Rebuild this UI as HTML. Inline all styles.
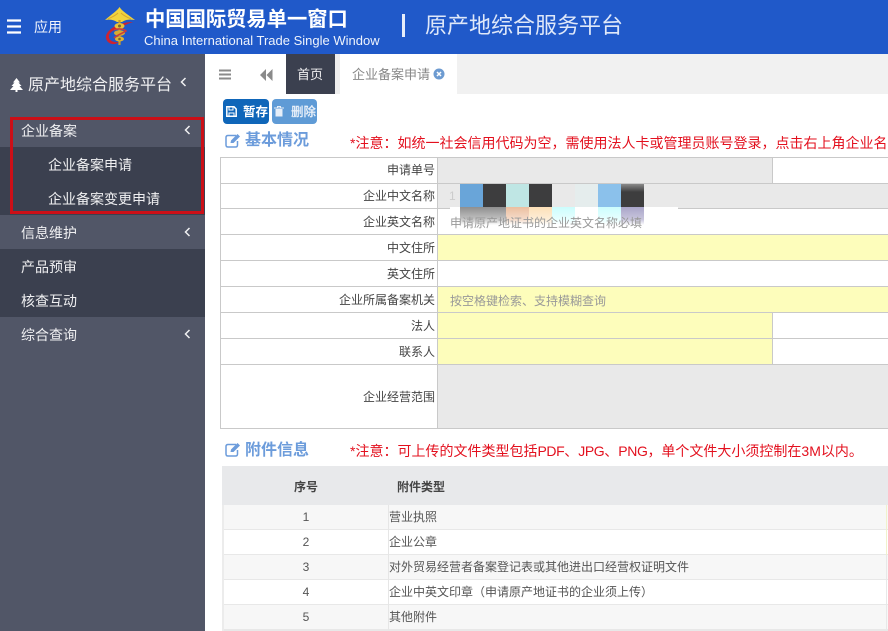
<!DOCTYPE html>
<html lang="zh"><head><meta charset="utf-8"><title>原产地综合服务平台</title>
<style>
html,body{margin:0;padding:0;background:#fff}
body{width:888px;height:631px;overflow:hidden;position:relative;font-family:"Liberation Sans","Noto Sans CJK SC",sans-serif;color:#333;filter:blur(.3px)}
.a,.t{position:absolute}
.t{white-space:nowrap;line-height:20px}
.menu{color:#f0f0f2;font-size:14px;left:21px}
.sub{color:#f0f0f2;font-size:14px;left:48px}
.lab{font-size:12px;color:#444;right:453px;text-align:right}
.note{color:#e3101e;font-size:14px;left:350px}
.note span{letter-spacing:-.4px}
.sec{color:#6c9cdb;font-size:16px;font-weight:bold;left:245px}
.num{font-size:12px;color:#555;left:286px;width:40px;text-align:center}
.cell{font-size:12px;color:#555;left:389px}
.ph{font-size:12px;color:#999;left:450px}
</style></head><body>
<div class="a" style="left:0;top:0;width:888px;height:54px;background:#2059c9"></div>
<svg class="a" style="left:7px;top:19px" width="15" height="15"><path d="M0 1.500H14M0 7.500H14M0 13.500H14" stroke="#fff" stroke-width="2.200"/></svg>
<div class="t" style="left:34px;top:17px;font-size:14px;color:#f2f5fc">应用</div>
<svg class="a" style="left:104px;top:6px" width="32" height="41" viewBox="0 0 32 41">
<path d="M29 16C13 16 1 25 2 32C3 38 10 40 15 36C9 37 4 34 5 29C7 24 18 20 29 16Z" fill="#cf2230"/>
<path d="M15.500 1C13 5 8 8 1 14C6 13 10 14 13 16H18C21 14 25 13 31 14C23 8 18 5 15.500 1Z" fill="#f2d33d"/>
<path d="M4 13C8 11 11 10 14 7M27 13C23 11 20 10 17 7" stroke="#d9a92c" stroke-width="1" fill="none"/>
<path d="M15.500 14V39" stroke="#c89a2a" stroke-width="2.200"/>
<ellipse cx="15.500" cy="20" rx="5" ry="3" fill="#e9c23a"/>
<ellipse cx="15.500" cy="27" rx="5.500" ry="2.800" fill="#d7ab30"/>
<ellipse cx="15.500" cy="33" rx="4.500" ry="2.500" fill="#e0b432"/>
<path d="M10 24C14 22 20 23 22 25C19 27 13 29 10 32" stroke="#cf3a3a" stroke-width="1.500" fill="none"/>
<circle cx="15.500" cy="20" r="1.500" fill="#7a6a30"/>
<circle cx="15.500" cy="33" r="1.300" fill="#7a6a30"/>
</svg>
<div class="t" style="left:145px;top:10px;font-size:20.300px;font-weight:bold;color:#fff">中国国际贸易单一窗口</div>
<div class="t" style="left:144px;top:31px;font-size:13px;color:#eef3fc">China International Trade Single Window</div>
<div class="a" style="left:402px;top:14px;width:3px;height:23px;background:#e6edfa"></div>
<div class="t" style="left:425px;top:16px;font-size:22px;color:#dfe8f9">原产地综合服务平台</div>
<div class="a" style="left:0;top:54px;width:205px;height:577px;background:#515667"></div>
<svg class="a" style="left:10px;top:78px" width="13" height="14" viewBox="0 0 13 14"><path d="M6.500 0L10 4.500H8.500L11.500 8H9.500L13 12H7.500V14H5.500V12H0L3.500 8H1.500L4.500 4.500H3Z" fill="#fff"/></svg>
<div class="t" style="left:28px;top:76px;font-size:16px;color:#f0f0f2">原产地综合服务平台</div>
<svg class="a" style="left:180px;top:77px" width="7" height="10"><path d="M5.500 1L1.500 5L5.500 9" stroke="#f0f0f2" stroke-width="1.500" fill="none"/></svg>
<div class="a" style="left:0;top:147px;width:205px;height:68px;background:#3b404f"></div>
<div class="a" style="left:0;top:249px;width:205px;height:68px;background:#3b404f"></div>
<div class="t menu" style="top:121px">企业备案</div>
<div class="t sub" style="top:155px">企业备案申请</div>
<div class="t sub" style="top:189px">企业备案变更申请</div>
<div class="t menu" style="top:223px">信息维护</div>
<div class="t menu" style="top:257px">产品预审</div>
<div class="t menu" style="top:291px">核查互动</div>
<div class="t menu" style="top:325px">综合查询</div>
<svg class="a" style="left:184px;top:125px" width="7" height="10"><path d="M5.500 1L1.500 5L5.500 9" stroke="#f0f0f2" stroke-width="1.500" fill="none"/></svg>
<svg class="a" style="left:184px;top:227px" width="7" height="10"><path d="M5.500 1L1.500 5L5.500 9" stroke="#f0f0f2" stroke-width="1.500" fill="none"/></svg>
<svg class="a" style="left:184px;top:329px" width="7" height="10"><path d="M5.500 1L1.500 5L5.500 9" stroke="#f0f0f2" stroke-width="1.500" fill="none"/></svg>
<div class="a" style="left:10px;top:117px;width:188px;height:91px;border:3px solid #cc0f17"></div>
<svg class="a" style="left:219px;top:69px" width="12" height="11"><path d="M0 1.500H12M0 5.500H12M0 9.500H12" stroke="#8a8a8a" stroke-width="2"/></svg>
<svg class="a" style="left:260px;top:69px" width="13" height="12"><path d="M6 0V12L0 6ZM12.500 0V12L6.500 6Z" fill="#8a8a8a"/></svg>
<div class="a" style="left:286px;top:54px;width:49px;height:40px;background:#3b404f"></div>
<div class="t" style="left:297px;top:65px;font-size:13px;color:#f0f0f2">首页</div>
<div class="a" style="left:335px;top:54px;width:5px;height:40px;background:#eeeeee"></div>
<div class="a" style="left:457px;top:54px;width:431px;height:40px;background:#f1f1f1"></div>
<div class="t" style="left:352px;top:65px;font-size:13px;color:#888">企业备案申请</div>
<svg class="a" style="left:433px;top:68px" width="12" height="12"><circle cx="6" cy="6" r="5.500" fill="#6d9bd1"/><path d="M4 4L8 8M8 4L4 8" stroke="#fff" stroke-width="1.500"/></svg>
<div class="a" style="left:223px;top:99px;width:46px;height:25px;background:#0f66b9;border-radius:4px"></div>
<div class="a" style="left:272px;top:99px;width:45px;height:25px;background:#5f9bd6;border-radius:4px"></div>
<svg class="a" style="left:226px;top:106px" width="11" height="11"><path d="M.8.8H8L10.200 3V10.200H.8Z" fill="none" stroke="#fff" stroke-width="1.500"/><path d="M3 1V4H7V1M3 10V7H8V10" stroke="#fff" fill="none"/></svg>
<div class="t" style="left:243px;top:102px;font-size:12.500px;font-weight:bold;color:#fff">暂存</div>
<svg class="a" style="left:274px;top:106px" width="10" height="11"><path d="M0 2H10M3.500 2V.5H6.500V2" stroke="#e6eef8" fill="none"/><path d="M1.500 3H8.500V10.500H1.500Z" fill="#e6eef8"/></svg>
<div class="t" style="left:291px;top:102px;font-size:12.500px;font-weight:bold;color:#e6eef8">删除</div>
<svg class="a" style="left:225px;top:133px" width="16" height="15" viewBox="0 0 16 15"><path d="M11 2.500H3Q1 2.500 1 4.500V12Q1 14 3 14H10.500Q12.500 14 12.500 12V8" fill="none" stroke="#6c9cdb" stroke-width="1.500"/><path d="M5.500 10L6 7.500L12.500 1L15 3.500L8.500 10Z" fill="#6c9cdb"/></svg>
<div class="t sec" style="top:131px">基本情况</div>
<div class="t note" style="top:133px">*注意：如统一社会信用代码为空，需使用法人卡或管理员账号登录，点击右上角企业名</div>
<div class="a" style="left:438px;top:158px;width:334px;height:25px;background:#e9e9e9"></div>
<div class="a" style="left:438px;top:184px;width:450px;height:24px;background:#e9e9e9"></div>
<div class="a" style="left:438px;top:235px;width:450px;height:25px;background:#fdfdbb"></div>
<div class="a" style="left:438px;top:287px;width:450px;height:25px;background:#fdfdbb"></div>
<div class="a" style="left:438px;top:313px;width:334px;height:51px;background:#fdfdbb"></div>
<div class="a" style="left:438px;top:365px;width:450px;height:63px;background:#e9e9e9"></div>
<div class="a" style="left:220px;top:157px;width:668px;height:1px;background:#c9c9c9"></div>
<div class="a" style="left:220px;top:183px;width:668px;height:1px;background:#c9c9c9"></div>
<div class="a" style="left:220px;top:208px;width:668px;height:1px;background:#c9c9c9"></div>
<div class="a" style="left:220px;top:234px;width:668px;height:1px;background:#c9c9c9"></div>
<div class="a" style="left:220px;top:260px;width:668px;height:1px;background:#c9c9c9"></div>
<div class="a" style="left:220px;top:286px;width:668px;height:1px;background:#c9c9c9"></div>
<div class="a" style="left:220px;top:312px;width:668px;height:1px;background:#c9c9c9"></div>
<div class="a" style="left:220px;top:338px;width:668px;height:1px;background:#c9c9c9"></div>
<div class="a" style="left:220px;top:364px;width:668px;height:1px;background:#c9c9c9"></div>
<div class="a" style="left:220px;top:428px;width:668px;height:1px;background:#c9c9c9"></div>
<div class="a" style="left:220px;top:157px;width:1px;height:272px;background:#c9c9c9"></div>
<div class="a" style="left:437px;top:157px;width:1px;height:272px;background:#c9c9c9"></div>
<div class="a" style="left:772px;top:157px;width:1px;height:26px;background:#c9c9c9"></div>
<div class="a" style="left:772px;top:312px;width:1px;height:52px;background:#c9c9c9"></div>
<div class="t lab" style="top:160px">申请单号</div>
<div class="t lab" style="top:186px">企业中文名称</div>
<div class="t lab" style="top:212px">企业英文名称</div>
<div class="t lab" style="top:238px">中文住所</div>
<div class="t lab" style="top:264px">英文住所</div>
<div class="t lab" style="top:290px">企业所属备案机关</div>
<div class="t lab" style="top:316px">法人</div>
<div class="t lab" style="top:342px">联系人</div>
<div class="t lab" style="top:387px">企业经营范围</div>
<div class="a" style="left:450px;top:207px;width:228px;height:27px;background:#fff"></div>
<div class="a" style="left:460px;top:184px;width:23px;height:23px;background:#69a5d9"></div>
<div class="a" style="left:483px;top:184px;width:23px;height:23px;background:#3d3d3e"></div>
<div class="a" style="left:506px;top:184px;width:23px;height:23px;background:#bfe6e4"></div>
<div class="a" style="left:529px;top:184px;width:23px;height:23px;background:#3d3d3e"></div>
<div class="a" style="left:575px;top:184px;width:23px;height:23px;background:#e5eded"></div>
<div class="a" style="left:598px;top:184px;width:23px;height:23px;background:#8bc1eb"></div>
<div class="a" style="left:621px;top:184px;width:23px;height:23px;background:linear-gradient(#8a8a8a,#3d3d3e 35%)"></div>
<div class="a" style="left:460px;top:207px;width:46px;height:18px;background:linear-gradient(#8f8f8f,#bbb 60%,#fff)"></div>
<div class="a" style="left:506px;top:207px;width:23px;height:18px;background:linear-gradient(#ecbf9f,#f5dccb 70%,#fff)"></div>
<div class="a" style="left:529px;top:207px;width:23px;height:18px;background:linear-gradient(#fde0b8,#fdeed8 70%,#fff)"></div>
<div class="a" style="left:552px;top:207px;width:23px;height:18px;background:linear-gradient(#ccfdfd,#e8ffff 70%,#fff)"></div>
<div class="a" style="left:598px;top:207px;width:23px;height:18px;background:linear-gradient(#ccfdfd,#e8ffff 70%,#fff)"></div>
<div class="a" style="left:621px;top:207px;width:23px;height:18px;background:linear-gradient(#a9a5c9,#c9c6dd 70%,#fff)"></div>
<div class="t" style="left:449px;top:186px;font-size:12px;color:#ccc">1</div>
<div class="t ph" style="top:213px">申请原产地证书的企业英文名称必填</div>
<div class="t ph" style="top:291px">按空格键检索、支持模糊查询</div>
<svg class="a" style="left:225px;top:442px" width="16" height="15" viewBox="0 0 16 15"><path d="M11 2.500H3Q1 2.500 1 4.500V12Q1 14 3 14H10.500Q12.500 14 12.500 12V8" fill="none" stroke="#6c9cdb" stroke-width="1.500"/><path d="M5.500 10L6 7.500L12.500 1L15 3.500L8.500 10Z" fill="#6c9cdb"/></svg>
<div class="t sec" style="top:441px">附件信息</div>
<div class="t note" style="top:441px">*注意：可上传的文件类型包括<span>PDF</span>、<span>JPG</span>、<span>PNG</span>，单个文件大小须控制在3M以内。</div>
<div class="a" style="left:222px;top:466px;width:666px;height:39px;background:#e8e9eb"></div>
<div class="a" style="left:222px;top:505px;width:666px;height:25px;background:#f7f7f7"></div>
<div class="a" style="left:222px;top:555px;width:666px;height:25px;background:#f7f7f7"></div>
<div class="a" style="left:222px;top:605px;width:666px;height:25px;background:#f7f7f7"></div>
<div class="a" style="left:222px;top:529px;width:666px;height:1px;background:#e8e8e8"></div>
<div class="a" style="left:222px;top:554px;width:666px;height:1px;background:#e8e8e8"></div>
<div class="a" style="left:222px;top:579px;width:666px;height:1px;background:#e8e8e8"></div>
<div class="a" style="left:222px;top:604px;width:666px;height:1px;background:#e8e8e8"></div>
<div class="a" style="left:222px;top:629px;width:666px;height:2px;background:#e8e8e8"></div>
<div class="a" style="left:222px;top:505px;width:2px;height:126px;background:#ececec"></div>
<div class="a" style="left:388px;top:505px;width:1px;height:125px;background:#e6e6e6"></div>
<div class="a" style="left:886px;top:505px;width:1px;height:50px;background:#f1f1cc"></div>
<div class="a" style="left:886px;top:555px;width:1px;height:75px;background:#e8e8e8"></div>
<div class="t" style="left:294px;top:477px;font-size:12px;font-weight:bold;color:#444">序号</div>
<div class="t" style="left:397px;top:477px;font-size:12px;font-weight:bold;color:#444">附件类型</div>
<div class="t num" style="top:507px">1</div><div class="t cell" style="top:507px">营业执照</div>
<div class="t num" style="top:532px">2</div><div class="t cell" style="top:532px">企业公章</div>
<div class="t num" style="top:557px">3</div><div class="t cell" style="top:557px">对外贸易经营者备案登记表或其他进出口经营权证明文件</div>
<div class="t num" style="top:582px">4</div><div class="t cell" style="top:582px">企业中英文印章（申请原产地证书的企业须上传）</div>
<div class="t num" style="top:607px">5</div><div class="t cell" style="top:607px">其他附件</div>
</body></html>
